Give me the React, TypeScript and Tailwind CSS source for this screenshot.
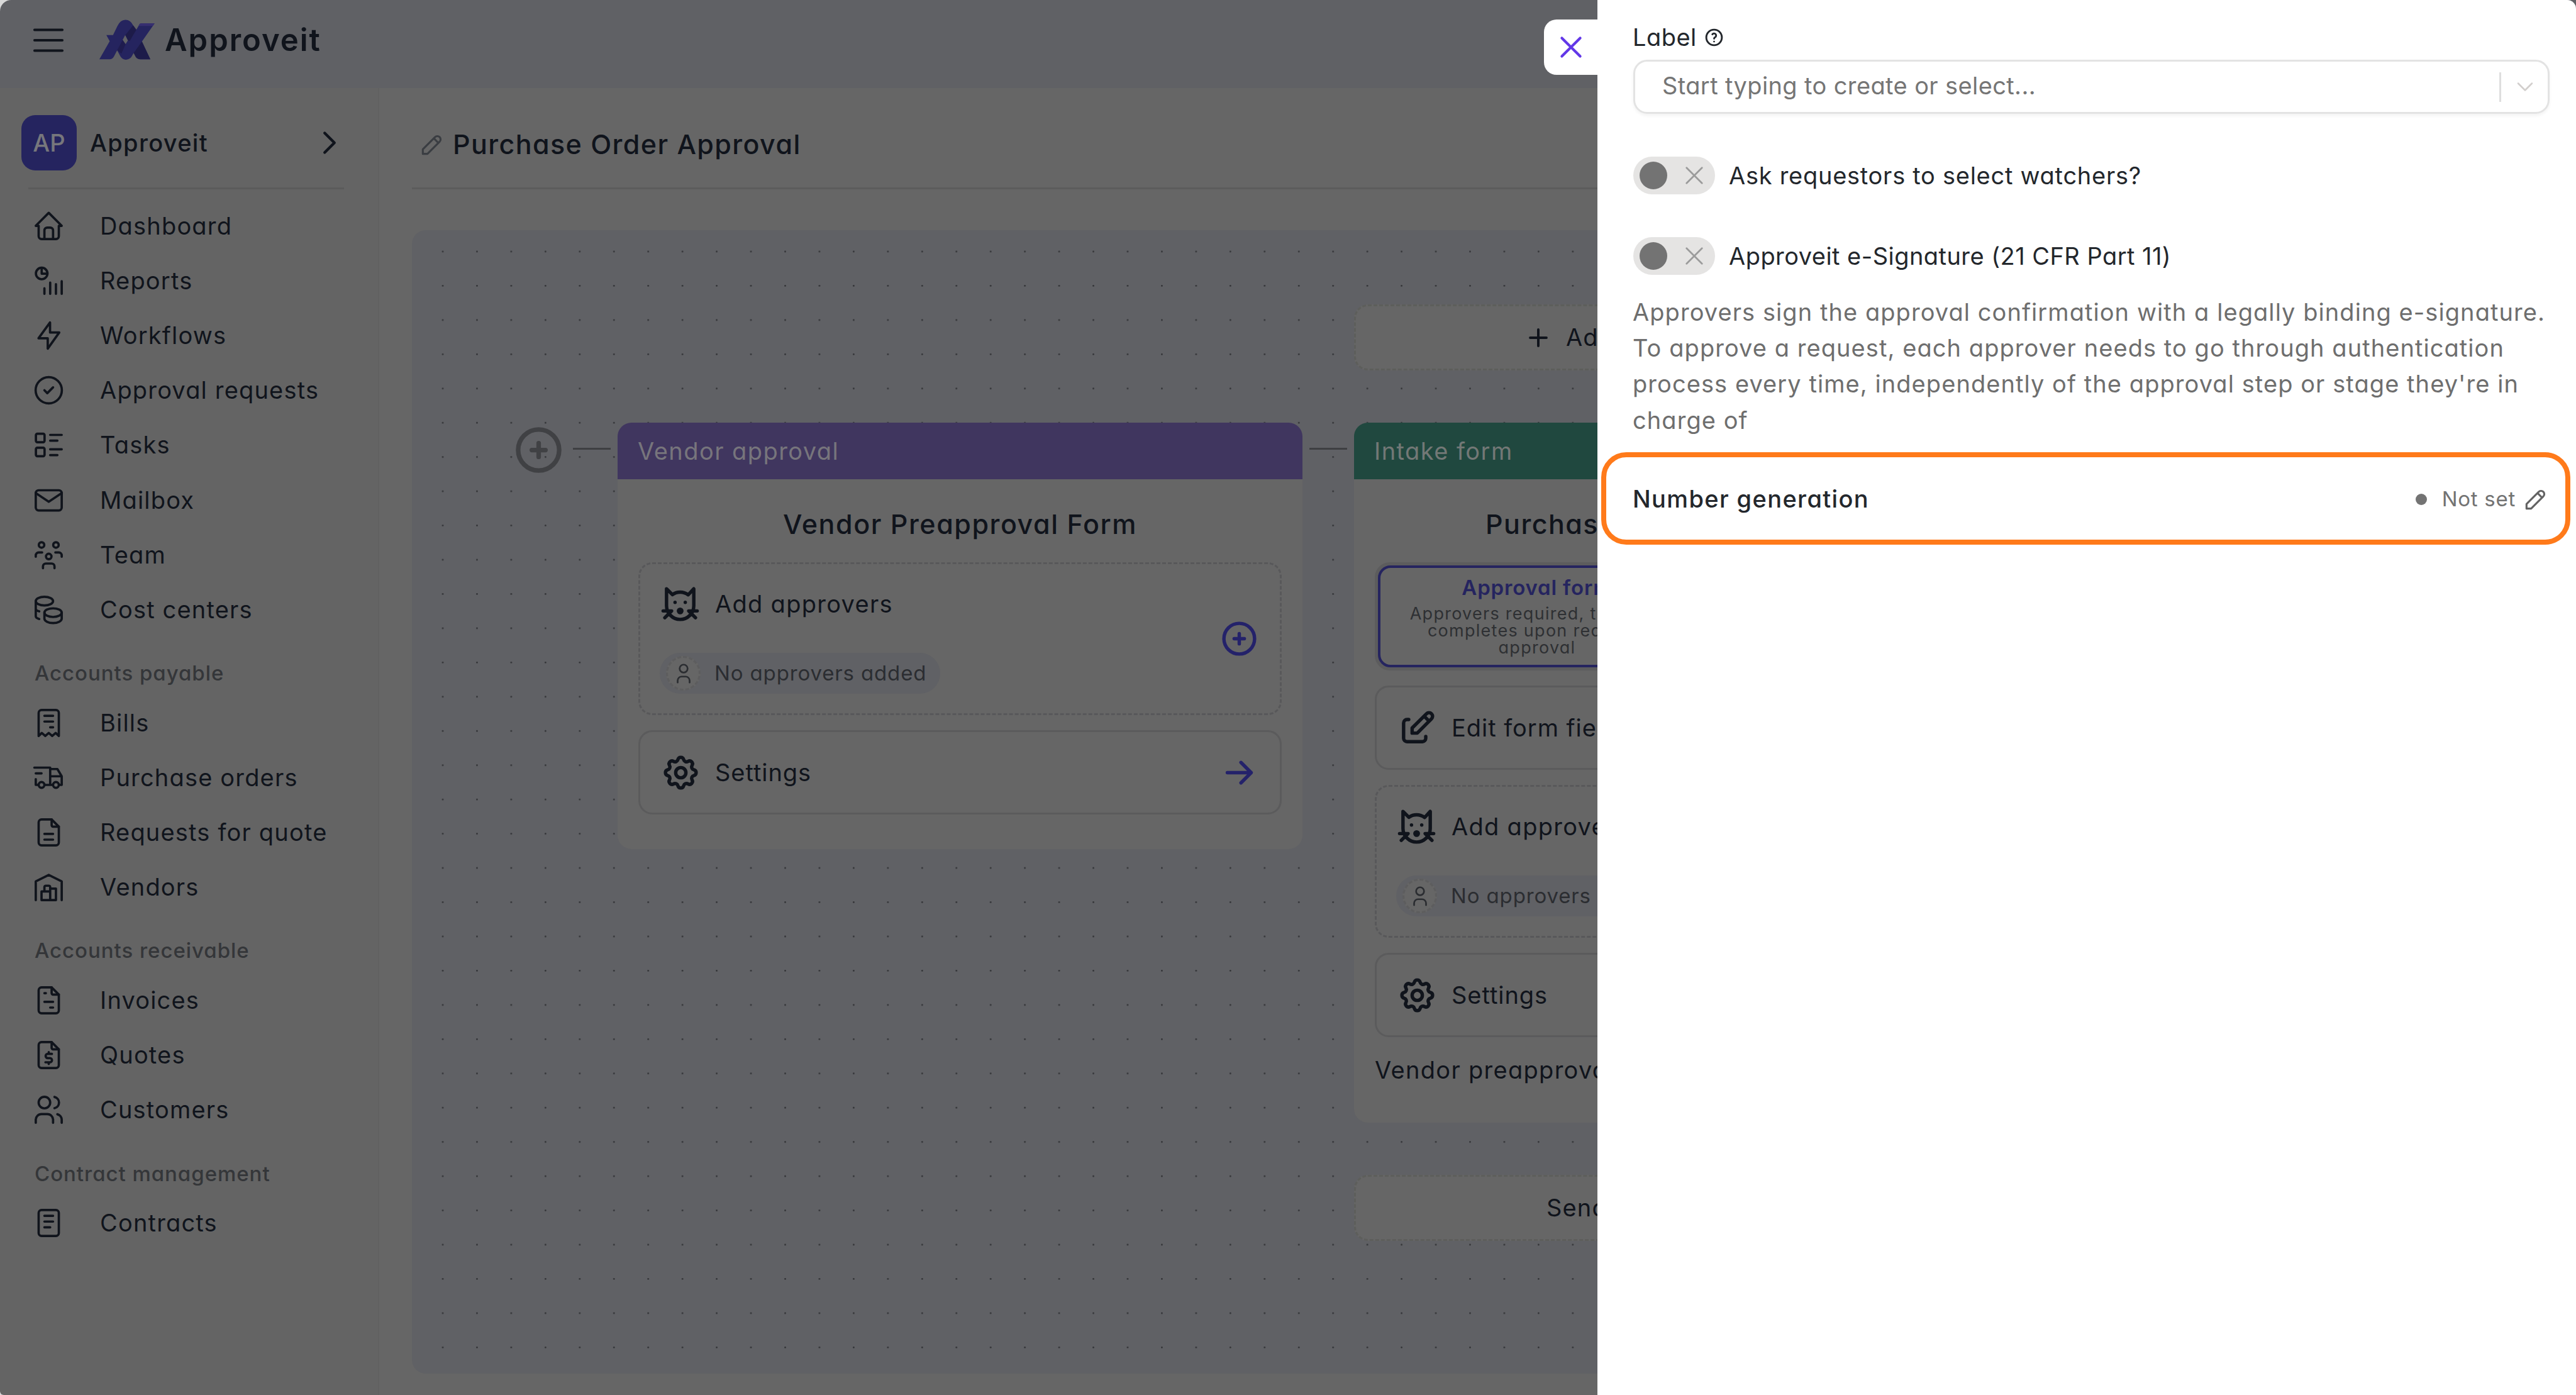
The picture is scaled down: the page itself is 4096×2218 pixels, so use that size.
import type { ReactNode } from "react";

type IconProps = {
  className?: string;
  strokeWidth?: number;
  children: ReactNode;
};

function Icon({ className = "size-[55px]", strokeWidth = 1.6, children }: IconProps) {
  return (
    <svg
      viewBox="0 0 24 24"
      fill="none"
      stroke="currentColor"
      strokeWidth={strokeWidth}
      strokeLinecap="round"
      strokeLinejoin="round"
      className={`shrink-0 ${className}`}
    >
      {children}
    </svg>
  );
}

const sheet = (
  <>
    <path d="M14 3v4a1 1 0 0 0 1 1h4" />
    <path d="M14 3H7a2 2 0 0 0-2 2v14a2 2 0 0 0 2 2h10a2 2 0 0 0 2-2V8z" />
  </>
);

const icons = {
  home: (
    <path d="M5 11.8H3l9-9 9 9h-2M5 11.8V19a2 2 0 0 0 2 2h10a2 2 0 0 0 2-2v-7.2M9 21v-6a2 2 0 0 1 2-2h2a2 2 0 0 1 2 2v6" />
  ),
  reports: (
    <>
      <circle cx="7.1" cy="6.9" r="4" />
      <path d="M7.1 3v4h4M9 17.2V21M13 13.2V21M17 14.3V21M21 12.3V21" />
    </>
  ),
  workflows: <path d="M12.9 2.9v7h6.4l-8 11.2v-7.2H4.9z" />,
  requests: (
    <>
      <circle cx="12" cy="12" r="9.1" />
      <path d="m9 12 2 2 4-4" />
    </>
  ),
  tasks: (
    <>
      <rect x="3.1" y="4.2" width="6" height="5.9" rx="1" />
      <rect x="3.1" y="13.9" width="6" height="5.9" rx="1" />
      <path d="M13 5h8M13 9h5M13 15h8M13 19h5" />
    </>
  ),
  mailbox: (
    <>
      <rect x="3" y="5" width="18" height="14" rx="2" />
      <path d="m3 7 9 6 9-6" />
    </>
  ),
  team: (
    <>
      <circle cx="7" cy="5" r="1.9" />
      <circle cx="17" cy="5" r="1.9" />
      <circle cx="12" cy="13" r="1.9" />
      <path d="M3 13.2v-1a2 2 0 0 1 2-2h2.4M21 13.2v-1a2 2 0 0 0-2-2h-2.4M8 21.1v-1.2a2 2 0 0 1 2-2h4a2 2 0 0 1 2 2v1.2" />
    </>
  ),
  costs: (
    <>
      <ellipse cx="9" cy="6" rx="6" ry="3" />
      <ellipse cx="15" cy="14" rx="6" ry="3" />
      <path d="M9 14v4.2c0 1.6 2.7 3 6 3s6-1.4 6-3V14M3 6v10.5c0 .9.9 1.5 2.4 1.9M3 11.2c0 .9.9 1.5 2.4 1.9" />
    </>
  ),
  bills: (
    <path d="M5 21V5a2 2 0 0 1 2-2h10a2 2 0 0 1 2 2v16l-2.2-2.1-2.4 2.1-2.4-2.1L9.6 21l-2.4-2.1zM9 7h6M9 11h6M13 15h2" />
  ),
  orders: (
    <>
      <circle cx="7" cy="17" r="2" />
      <circle cx="17" cy="17" r="2" />
      <path d="M5 17H3v-4M2 5h11v12M9 17h6M19 17h2v-6h-8M13 6h5l3 5M3 9h4" />
    </>
  ),
  quoteRequests: (
    <>
      {sheet}
      <path d="M9 13h6M9 17h6" />
    </>
  ),
  vendors: (
    <path d="M3 21V8l9-4.5L21 8v13M13 13h4v8H7v-6h6M13 21v-9a1 1 0 0 0-1-1h-2a1 1 0 0 0-1 1v3" />
  ),
  invoices: (
    <>
      {sheet}
      <path d="M9 7h1M9 13h6M13 17h2" />
    </>
  ),
  quotes: (
    <>
      {sheet}
      <path d="M14.2 11.2h-2.9a1.45 1.45 0 0 0 0 2.9h1.5a1.45 1.45 0 0 1 0 2.9H9.7M12 10v1.2M12 17v1.2" />
    </>
  ),
  customers: (
    <path d="M5 7a4 4 0 1 0 8 0 4 4 0 1 0-8 0M3 21v-2a4 4 0 0 1 4-4h4a4 4 0 0 1 4 4v2M16 3.1a4 4 0 0 1 0 7.8M21 21v-2a4 4 0 0 0-3-3.9" />
  ),
  contracts: (
    <>
      <rect x="5" y="3" width="14" height="18" rx="2" />
      <path d="M9 7h6M9 11h6M9 15h4" />
    </>
  ),
};

const sections: { title?: string; items: { label: string; icon: ReactNode }[] }[] = [
  {
    items: [
      { label: "Dashboard", icon: icons.home },
      { label: "Reports", icon: icons.reports },
      { label: "Workflows", icon: icons.workflows },
      { label: "Approval requests", icon: icons.requests },
      { label: "Tasks", icon: icons.tasks },
      { label: "Mailbox", icon: icons.mailbox },
      { label: "Team", icon: icons.team },
      { label: "Cost centers", icon: icons.costs },
    ],
  },
  {
    title: "Accounts payable",
    items: [
      { label: "Bills", icon: icons.bills },
      { label: "Purchase orders", icon: icons.orders },
      { label: "Requests for quote", icon: icons.quoteRequests },
      { label: "Vendors", icon: icons.vendors },
    ],
  },
  {
    title: "Accounts receivable",
    items: [
      { label: "Invoices", icon: icons.invoices },
      { label: "Quotes", icon: icons.quotes },
      { label: "Customers", icon: icons.customers },
    ],
  },
  {
    title: "Contract management",
    items: [{ label: "Contracts", icon: icons.contracts }],
  },
];

function Logo() {
  return (
    <svg viewBox="40 38 364 264" className="h-[64px] w-[88px] shrink-0">
      <path
        fill="#25245f"
        fillRule="evenodd"
        d="M40 299 108 180 86 140H130L158 82Q178 40 211 40Q245 40 262 76L283 105 305 68Q308 63 314 63H403L320 182 375 299H310Q290 299 280 285L266 258 250 285Q236 302 214 302Q192 302 178 280L157 240 135 283Q125 299 108 299ZM210 140 228 175 212 200 193 172Z"
      />
      <path fill="#1d1b49" d="M262 76 283 105 240 178 228 175 211 140Z" />
      <path fill="#1d1b49" d="M320 182 375 299H310Q290 299 280 285L266 258Z" />
      <path fill="#1f1c4e" d="M193 172 212 200 185 262 157 240Z" />
      <path fill="#372f70" d="M305 68Q308 63 314 63H403L392 80H298Z" />
    </svg>
  );
}

function PencilIcon({ className }: { className: string }) {
  return (
    <Icon className={className} strokeWidth={1.7}>
      <path d="M4 20h4L18.5 9.5a2.83 2.83 0 1 0-4-4L4 16zM13.5 6.5l4 4" />
    </Icon>
  );
}

function CatIcon() {
  return (
    <Icon className="size-[65px]" strokeWidth={2}>
      <path d="M20 3v10a8 8 0 1 1-16 0V3l3.43 3.43A8 8 0 0 1 12 5c1.77 0 3.4.57 4.73 1.55zM2 16h5l-4 4M22 16h-5l4 4M11 16a1 1 0 1 0 2 0 1 1 0 1 0-2 0M9 11v.01M15 11v.01" />
    </Icon>
  );
}

function GearIcon() {
  return (
    <Icon className="size-[65px]" strokeWidth={2}>
      <path d="M10.325 4.317c.426-1.756 2.924-1.756 3.35 0a1.724 1.724 0 0 0 2.573 1.066c1.543-.94 3.31.826 2.37 2.37a1.724 1.724 0 0 0 1.065 2.572c1.756.426 1.756 2.924 0 3.35a1.724 1.724 0 0 0-1.066 2.573c.94 1.543-.826 3.31-2.37 2.37a1.724 1.724 0 0 0-2.572 1.065c-.426 1.756-2.924 1.756-3.35 0a1.724 1.724 0 0 0-2.573-1.066c-1.543.94-3.31-.826-2.37-2.37a1.724 1.724 0 0 0-1.065-2.572c-1.756-.426-1.756-2.924 0-3.35a1.724 1.724 0 0 0 1.066-2.573c-.94-1.543.826-3.31 2.37-2.37 1 .608 2.296.07 2.572-1.065z" />
      <circle cx="12" cy="12" r="3" />
    </Icon>
  );
}

function PlusCircle({ className }: { className: string }) {
  return (
    <Icon className={className} strokeWidth={2}>
      <circle cx="12" cy="12" r="9" />
      <path d="M9 12h6M12 9v6" />
    </Icon>
  );
}

function Header() {
  return (
    <header className="flex h-[140px] shrink-0 items-start bg-[#606165] pl-[44px]">
      <Icon className="mt-[31px] size-[66px]" strokeWidth={1.5}>
        <path d="M4 6h16M4 12h16M4 18h16" />
      </Icon>
      <div className="mt-[31px] ml-[48px] flex h-[64px] items-center gap-[16px]">
        <Logo />
        <span className="text-[49px] leading-none font-semibold tracking-[0.04em]">Approveit</span>
      </div>
    </header>
  );
}

function Sidebar() {
  return (
    <aside className="flex w-[603px] shrink-0 flex-col border-r-2 border-[#616161] bg-[#646464]">
      <div className="mt-[43px] ml-[34px] flex h-[88px] items-center">
        <div className="flex size-[88px] items-center justify-center rounded-[22px] bg-[#25245f] text-[38px] font-medium text-[#77777c]">
          AP
        </div>
        <span className="ml-[21px] text-[38px] font-medium tracking-[0.035em]">Approveit</span>
        <Icon className="ml-auto mr-[46px] size-[62px]" strokeWidth={1.7}>
          <path d="m9 6 6 6-6 6" />
        </Icon>
      </div>
      <div className="mt-[27px] ml-[45px] h-[3px] w-[502px] bg-[#5b5b5b]" />
      <nav className="mt-[15px] flex flex-col">
        {sections.map((section, i) => (
          <div key={i}>
            {section.title && (
              <div className="flex h-[93px] items-center pt-[23px] pl-[55px] text-[33px] font-medium tracking-[0.029em] text-[#343639]">
                {section.title}
              </div>
            )}
            {section.items.map((item) => (
              <div key={item.label} className="flex h-[87.1px] items-center pl-[50px]">
                <Icon>{item.icon}</Icon>
                <span className="ml-[54px] text-[38px] tracking-[0.031em]">{item.label}</span>
              </div>
            ))}
          </div>
        ))}
      </nav>
    </aside>
  );
}

function ApproversBox() {
  return (
    <div className="flex h-[243px] items-center justify-between rounded-[22px] border-3 border-dashed border-[#58585a] pr-[32px] pl-[31px]">
      <div className="flex flex-col">
        <div className="flex h-[65px] items-center">
          <CatIcon />
          <span className="ml-[23px] text-[38px] tracking-[0.034em]">Add approvers</span>
        </div>
        <div className="mt-[45px] flex h-[65px] w-[446px] items-center rounded-full bg-[#606165] pl-[10px] text-[#2b2d31]">
          <div className="flex size-[55px] items-center justify-center rounded-full border-3 border-dashed border-[#5d5d5e] bg-[#666666]">
            <Icon className="size-[38px]" strokeWidth={1.7}>
              <path d="M8 7a4 4 0 1 0 8 0 4 4 0 1 0-8 0M6 21v-2a4 4 0 0 1 4-4h4a4 4 0 0 1 4 4v2" />
            </Icon>
          </div>
          <span className="ml-[22px] text-[33px] tracking-[0.026em] whitespace-nowrap">
            No approvers added
          </span>
        </div>
      </div>
      <PlusCircle className="size-[65px] text-[#24226a]" />
    </div>
  );
}

function ActionBox({ label, icon }: { label: string; icon: ReactNode }) {
  return (
    <div className="flex h-[134px] items-center rounded-[22px] border-3 border-[#5b5b5c] pr-[32px] pl-[32px]">
      {icon}
      <span className="ml-[22px] text-[38px] tracking-[0.025em]">{label}</span>
      <Icon className="ml-auto size-[65px] text-[#24226a]" strokeWidth={2}>
        <path d="M5 12h14M13 18l6-6M13 6l6 6" />
      </Icon>
    </div>
  );
}

function Canvas() {
  return (
    <div className="relative mt-[65px] h-[1818px] overflow-hidden rounded-l-[22px] bg-[#606165]">
      <svg className="absolute inset-0 size-full">
        <defs>
          <pattern id="dots" x="21.8" y="6.8" width="54.45" height="54.45" patternUnits="userSpaceOnUse">
            <circle cx="27.2" cy="27.2" r="1.35" fill="#303134" />
          </pattern>
        </defs>
        <rect width="100%" height="100%" fill="url(#dots)" />
      </svg>

      <PlusCircle className="absolute top-[306px] left-[158px] size-[87px] text-[#404144]" />
      <div className="absolute top-[346px] left-[256px] h-[3px] w-[60px] bg-[#3e3f42]" />
      <div className="absolute top-[346px] left-[1427px] h-[3px] w-[60px] bg-[#3e3f42]" />

      <section className="absolute top-[306px] left-[327px] h-[678px] w-[1089px] overflow-hidden rounded-[22px] bg-[#666666]">
        <div className="flex h-[90px] items-center bg-[#40365f] pl-[32px] text-[38px] tracking-[0.038em] text-[#77757c]">
          Vendor approval
        </div>
        <h2 className="mt-[39px] text-center text-[43px] leading-[64px] font-medium tracking-[0.036em]">
          Vendor Preapproval Form
        </h2>
        <div className="mt-[29px] flex flex-col gap-[24px] px-[33px]">
          <ApproversBox />
          <ActionBox label="Settings" icon={<GearIcon />} />
        </div>
      </section>

      <div className="absolute top-[118px] left-[1498px] flex h-[105px] w-[1089px] items-center rounded-[22px] border-3 border-dashed border-[#5d5e5b] bg-[#666666] pl-[265px]">
        <Icon className="size-[50px]" strokeWidth={1.9}>
          <path d="M5.8 12h12.4M12 5.8v12.4" />
        </Icon>
        <span className="ml-[19px] text-[38px] tracking-[0.03em]">Add</span>
      </div>

      <section className="absolute top-[306px] left-[1498px] h-[1113px] w-[1089px] overflow-hidden rounded-[22px] bg-[#666666]">
        <div className="flex h-[90px] items-center bg-[#20483f] pl-[32px] text-[38px] tracking-[0.038em] text-[#737876]">
          Intake form
        </div>
        <h2 className="mt-[39px] pl-[209px] text-[43px] leading-[64px] font-medium tracking-[0.034em] whitespace-nowrap">
          Purchase Order
        </h2>
        <div className="mt-[29px] flex flex-col px-[33px]">
          <div className="h-[172px] w-[516px] rounded-[24px] bg-[#5c5c5d] p-[5px]">
            <div className="flex size-full flex-col items-center rounded-[20px] border-[4px] border-[#25245f] bg-[#666666] pt-[14px]">
              <span className="text-[33px] leading-[34px] font-semibold tracking-[0.025em] text-[#25245f]">
                Approval form
              </span>
              <p className="mt-[11px] text-center text-[27px] leading-[27.2px] tracking-[0.047em] whitespace-nowrap text-[#2e3033]">
                Approvers required, the form
                <br />
                completes upon required
                <br />
                approval
              </p>
            </div>
          </div>
          <div className="mt-[24px] flex flex-col gap-[24px]">
            <ActionBox
              label="Edit form fields"
              icon={
                <Icon className="size-[65px]" strokeWidth={2}>
                  <path d="M7 7H6a2 2 0 0 0-2 2v9a2 2 0 0 0 2 2h9a2 2 0 0 0 2-2v-1M20.385 6.585a2.1 2.1 0 0 0-2.97-2.97L9 12v3h3zM16 5l3 3" />
                </Icon>
              }
            />
            <ApproversBox />
            <ActionBox label="Settings" icon={<GearIcon />} />
          </div>
          <span className="mt-[27px] text-[38px] leading-[50px] tracking-[0.034em]">
            Vendor preapproval
          </span>
        </div>
      </section>

      <div className="absolute top-[1502px] left-[1498px] flex h-[105px] w-[1089px] items-center rounded-[22px] border-3 border-dashed border-[#5d5e5b] bg-[#666666] pl-[303px] text-[38px] tracking-[0.03em]">
        Send
      </div>
    </div>
  );
}

function Toggle({ label, tracking }: { label: string; tracking: string }) {
  return (
    <div className="flex h-[60px] items-center">
      <div className="flex h-[60px] w-[130px] items-center rounded-full bg-[#e5e4e3] pl-[10px]">
        <div className="size-[44px] rounded-full bg-[#737373]" />
        <Icon className="ml-[22px] size-[42px] text-[#9b9b9b]" strokeWidth={1.6}>
          <path d="M5 5l14 14M19 5 5 19" />
        </Icon>
      </div>
      <span className={`ml-[22px] text-[38px] whitespace-nowrap ${tracking}`}>{label}</span>
    </div>
  );
}

function Drawer() {
  return (
    <div className="absolute inset-y-0 right-0 w-[1556px] rounded-tr-[14px] bg-white text-[#23272c]">
      <button
        type="button"
        title="Close"
        className="absolute top-[31px] right-full flex h-[88px] w-[85px] items-center justify-center rounded-l-[20px] bg-white text-[#6237e8]"
      >
        <Icon className="size-[50px]" strokeWidth={2}>
          <path d="M5 5l14 14M19 5 5 19" />
        </Icon>
      </button>

      <div className="mt-[34px] ml-[56px] flex h-[50px] items-center">
        <span className="text-[38px] tracking-[0.012em]">Label</span>
        <Icon className="ml-[11px] size-[33px]" strokeWidth={2.1}>
          <circle cx="12" cy="12" r="9" />
          <path d="M12 16.8v.01M12 13.4a1.9 1.9 0 0 1 .9-1.4 2.4 2.4 0 1 0-2.9-3.6" />
        </Icon>
      </div>
      <div className="mt-[11px] ml-[57px] flex h-[86px] w-[1457px] items-center rounded-[22px] border-3 border-[#e3e3e3] shadow-[0_3px_5px_rgba(0,0,0,0.05)]">
        <span className="ml-[43px] pb-[3px] text-[38px] tracking-[0.01em] text-[#757575]">
          Start typing to create or select...
        </span>
        <div className="ml-auto h-[47px] w-[3px] bg-[#dedede]" />
        <Icon className="mr-[14px] ml-[16px] size-[44px] text-[#d2cfcd]" strokeWidth={1.4}>
          <path d="m6 9 6 6 6-6" />
        </Icon>
      </div>

      <div className="mt-[68px] ml-[57px] flex flex-col gap-[68px]">
        <Toggle label="Ask requestors to select watchers?" tracking="tracking-[0.019em]" />
        <Toggle label="Approveit e-Signature (21 CFR Part 11)" tracking="tracking-[0.012em]" />
      </div>
      <p className="mt-[31px] ml-[56px] text-[38px] leading-[57.2px] tracking-[0.028em] whitespace-nowrap text-[#6e6e6e]">
        Approvers sign the approval confirmation with a legally binding e-signature.
        <br />
        To approve a request, each approver needs to go through authentication
        <br />
        process every time, independently of the approval step or stage they're in
        <br />
        charge of
      </p>

      <div className="mt-[22px] ml-[6px] flex h-[147px] w-[1541px] items-center rounded-[40px] border-[8px] border-[#ff7a1a] pt-[3px] pr-[25px] pl-[42px]">
        <span className="text-[38px] font-medium tracking-[0.036em]">Number generation</span>
        <div className="ml-auto size-[18px] rounded-full bg-[#737373]" />
        <span className="ml-[24px] text-[33px] tracking-[0.022em] text-[#737373]">Not set</span>
        <PencilIcon className="ml-[10px] size-[44px] text-[#636363]" />
      </div>
    </div>
  );
}

export default function App() {
  return (
    <div className="relative h-[2218px] w-[4096px] overflow-hidden bg-[#d9d9d9] font-[Inter,'Liberation_Sans',sans-serif] text-[#10141c] [font-feature-settings:'cv11']">
      <div className="flex size-full flex-col overflow-hidden rounded-tl-[18px] rounded-bl-[6px]">
        <Header />
        <div className="flex min-h-0 flex-1">
          <Sidebar />
          <main className="min-w-0 flex-1 bg-[#666666] pl-[52px]">
            <div className="flex h-[161px] items-center border-b-3 border-[#5c5c5c] pt-[21px] pl-[10px]">
              <PencilIcon className="size-[44px] text-[#3a3d42]" />
              <h1 className="ml-[11px] text-[43px] font-medium tracking-[0.033em]">
                Purchase Order Approval
              </h1>
            </div>
            <Canvas />
          </main>
        </div>
      </div>
      <Drawer />
    </div>
  );
}
